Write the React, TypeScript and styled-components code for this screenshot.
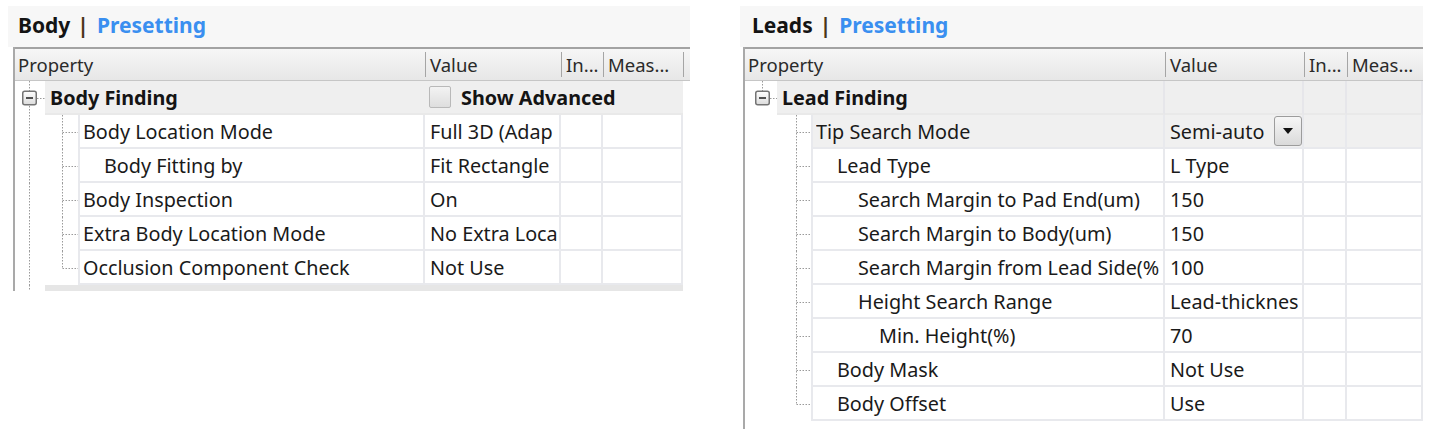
import React from "react";
import styled, { createGlobalStyle } from "styled-components";

const GlobalStyle = createGlobalStyle`
  html, body { margin: 0; padding: 0; background: #ffffff; }
  body { font-family: "Noto Sans", "Open Sans", "DejaVu Sans", sans-serif; color: #1a1a1a; }
  * { box-sizing: border-box; }
`;

const LINE = "#e8e9ed";
const DOT = "#9a9a9a";
const ROW_H = 34;
const ROW_FONT = "19.8px";

interface Cfg {
  x: number;
  width: number;
  titlePad: number;
  tableOffset: number;
  gutter: number;
  prop: number;
  value: number;
  inW: number;
  meas: number;
  expander: number;
  boxX: number;
  rootLineDown: boolean;
  childLineX: number;
  headerExtra: number;
  bottomStrip: boolean;
  catSeparators: boolean;
}

const leftCfg: Cfg = {
  x: 8, width: 682, titlePad: 10, tableOffset: 5,
  gutter: 63, prop: 347, value: 136, inW: 42, meas: 80,
  expander: 30, boxX: 7, rootLineDown: true, childLineX: 47,
  headerExtra: 7, bottomStrip: true, catSeparators: false,
};

const rightCfg: Cfg = {
  x: 50, width: 683, titlePad: 12, tableOffset: 3,
  gutter: 66, prop: 354, value: 139, inW: 43, meas: 76,
  expander: 32, boxX: 10, rootLineDown: false, childLineX: 51,
  headerExtra: 0, bottomStrip: false, catSeparators: true,
};

interface Item {
  label: string;
  value: string;
  level: number;
  selected?: boolean;
  dropdown?: boolean;
}

const Page = styled.div`
  display: flex;
  align-items: flex-start;
  width: 1438px;
  height: 434px;
  padding-top: 6px;
  overflow: hidden;
`;

const Panel = styled.section<{ $x: number; $w: number }>`
  margin-left: ${(p) => p.$x}px;
  width: ${(p) => p.$w}px;
  flex: none;
  display: flex;
  flex-direction: column;
`;

const TitleBar = styled.div<{ $pad: number }>`
  height: 41px;
  background: #f7f7f7;
  display: flex;
  align-items: center;
  padding-left: ${(p) => p.$pad}px;
  font-size: 21px;
  font-weight: 700;
  padding-bottom: 4px;
`;

const TitleName = styled.span`
  color: #141414;
`;

const TitleSep = styled.span`
  color: #4a3418;
  margin: 0 8px 0 7px;
`;

const TitleLink = styled.span`
  color: #3a8ff0;
`;

const Table = styled.div<{ $off: number }>`
  margin-left: ${(p) => p.$off}px;
  border-left: 2px solid #a9a9a9;
  display: flex;
  flex-direction: column;
  align-items: flex-start;
`;

const HeaderRow = styled.div`
  display: flex;
  height: 34px;
  border-top: 2px solid #a3a3a3;
  border-bottom: 1px solid #c6c6c6;
  background: linear-gradient(#f6f6f6, #e7e7e7);
  align-self: stretch;
`;

const HeaderCell = styled.div<{ $w: number; $pad?: number }>`
  width: ${(p) => p.$w}px;
  flex: none;
  display: flex;
  align-items: center;
  padding-left: ${(p) => p.$pad ?? 0}px;
  font-size: 18.5px;
  color: #2a2a2a;
  white-space: nowrap;
  overflow: hidden;
`;

const HeaderSep = styled.span`
  width: 1px;
  height: 25px;
  background: #a5a5a5;
  margin-right: 4px;
  flex: none;
`;

const Row = styled.div`
  display: flex;
  height: ${ROW_H}px;
  flex: none;
`;

const Gutter = styled.div<{ $w: number }>`
  width: ${(p) => p.$w}px;
  height: 100%;
  flex: none;
  background: #fff;
  svg { display: block; }
`;

const Cell = styled.div<{ $w: number; $bg?: string; $pad?: number; $left?: boolean }>`
  width: ${(p) => p.$w}px;
  height: 100%;
  flex: none;
  display: flex;
  align-items: center;
  padding-left: ${(p) => p.$pad ?? 5}px;
  background: ${(p) => p.$bg ?? "#fff"};
  border-right: 2px solid ${LINE};
  border-bottom: 2px solid ${LINE};
  ${(p) => (p.$left ? `border-left: 2px solid ${LINE};` : "")}
  font-size: ${ROW_FONT};
  color: #1a1a1a;
  white-space: nowrap;
  overflow: hidden;
`;

const CatCell = styled.div<{ $w: number; $pad?: number; $sep?: boolean }>`
  width: ${(p) => p.$w}px;
  height: 100%;
  flex: none;
  display: flex;
  align-items: center;
  padding-left: ${(p) => p.$pad ?? 5}px;
  background: #efefef;
  border-bottom: 2px solid #e9e9e9;
  ${(p) => (p.$sep ? "border-right: 2px solid #e6e6ea;" : "")}
  font-size: ${ROW_FONT};
  font-weight: 700;
  color: #141414;
  white-space: nowrap;
  overflow: hidden;
`;

const CellText = styled.span`
  flex: 1;
  overflow: hidden;
`;

const CheckBox = styled.span`
  width: 22px;
  height: 22px;
  border: 1.5px solid #b9b9b9;
  border-radius: 2px;
  background: linear-gradient(#f3f3f3, #dedede);
  margin-right: 10px;
  flex: none;
`;

const DropButton = styled.span`
  width: 28px;
  height: 30px;
  margin-right: 0;
  flex: none;
  border: 1px solid #9c9c9c;
  border-radius: 3px;
  background: linear-gradient(#f6f6f6, #dadada);
  display: flex;
  align-items: center;
  justify-content: center;
`;

const BottomStrip = styled.div`
  display: flex;
  height: 6px;
`;

const StripFill = styled.div<{ $w: number }>`
  width: ${(p) => p.$w}px;
  background: #e6e6e6;
`;

const Tail = styled.div`
  height: 8px;
`;

const dash = "1.5 1.5";

function ChildTree({ cfg, last }: { cfg: Cfg; last: boolean }) {
  const cx = cfg.childLineX + 0.5;
  const rootX = cfg.boxX + 7.5;
  return (
    <svg width={cfg.gutter} height={ROW_H}>
      {cfg.rootLineDown && (
        <line x1={rootX} y1={0} x2={rootX} y2={ROW_H} stroke={DOT} strokeWidth={1} strokeDasharray={dash} />
      )}
      <line x1={cx} y1={0} x2={cx} y2={last ? 17.5 : ROW_H} stroke={DOT} strokeWidth={1} strokeDasharray={dash} />
      <line x1={cx} y1={17.5} x2={cfg.gutter} y2={17.5} stroke={DOT} strokeWidth={1} strokeDasharray={dash} />
    </svg>
  );
}

function Expander({ cfg }: { cfg: Cfg }) {
  const bx = cfg.boxX;
  const mid = bx + 7.5;
  return (
    <svg width={cfg.expander} height={ROW_H}>
      <defs>
        <linearGradient id={`eg${cfg.x}`} x1="0" y1="0" x2="0" y2="1">
          <stop offset="0" stopColor="#ffffff" />
          <stop offset="1" stopColor="#dcdcdc" />
        </linearGradient>
      </defs>
      <line x1={mid} y1={0} x2={mid} y2={10} stroke={DOT} strokeWidth={1} strokeDasharray={dash} />
      {cfg.rootLineDown && (
        <line x1={mid} y1={25} x2={mid} y2={ROW_H} stroke={DOT} strokeWidth={1} strokeDasharray={dash} />
      )}
      <line x1={bx + 15} y1={17.5} x2={cfg.expander} y2={17.5} stroke={DOT} strokeWidth={1} strokeDasharray={dash} />
      <rect x={bx + 0.75} y={10.25} width={13.5} height={13.5} rx={2} fill={`url(#eg${cfg.x})`} stroke="#747474" strokeWidth={1.5} />
      <line x1={bx + 4} y1={17} x2={bx + 11} y2={17} stroke="#2a2a2a" strokeWidth={1.6} />
    </svg>
  );
}

function TreeTable({
  cfg, category, categoryExtra, items,
}: { cfg: Cfg; category: string; categoryExtra?: React.ReactNode; items: Item[] }) {
  const tableW = cfg.gutter + cfg.prop + cfg.value + cfg.inW + cfg.meas;
  return (
    <Table $off={cfg.tableOffset} style={{ width: tableW + cfg.headerExtra + 2 }}>
      <HeaderRow>
        <HeaderCell $w={cfg.gutter + cfg.prop} $pad={3}>Property</HeaderCell>
        <HeaderCell $w={cfg.value}><HeaderSep />Value</HeaderCell>
        <HeaderCell $w={cfg.inW}><HeaderSep />In...</HeaderCell>
        <HeaderCell $w={cfg.meas}><HeaderSep />Meas...</HeaderCell>
        {cfg.headerExtra > 0 && <HeaderCell $w={cfg.headerExtra}><HeaderSep /></HeaderCell>}
      </HeaderRow>
      <Row>
        <Gutter $w={cfg.expander}><Expander cfg={cfg} /></Gutter>
        <CatCell $w={cfg.gutter + cfg.prop - cfg.expander} $sep={cfg.catSeparators}>{category}</CatCell>
        {categoryExtra ? (
          <CatCell $w={cfg.value + cfg.inW + cfg.meas} $pad={4}>{categoryExtra}</CatCell>
        ) : (
          <>
            <CatCell $w={cfg.value} $sep={cfg.catSeparators} />
            <CatCell $w={cfg.inW} $sep={cfg.catSeparators} />
            <CatCell $w={cfg.meas} $sep={cfg.catSeparators} />
          </>
        )}
      </Row>
      {items.map((it, i) => {
        const bg = it.selected ? "#f0f0f0" : "#fff";
        return (
          <Row key={it.label}>
            <Gutter $w={cfg.gutter}><ChildTree cfg={cfg} last={i === items.length - 1} /></Gutter>
            <Cell $w={cfg.prop} $left $bg={bg} $pad={3 + (it.level - 1) * 21}>
              <CellText>{it.label}</CellText>
            </Cell>
            <Cell $w={cfg.value} $bg={bg}>
              <CellText>{it.value}</CellText>
              {it.dropdown && (
                <DropButton>
                  <svg width="10" height="6" viewBox="0 0 10 6"><path d="M0 0H10L5 6Z" fill="#111" /></svg>
                </DropButton>
              )}
            </Cell>
            <Cell $w={cfg.inW} $bg={bg} />
            <Cell $w={cfg.meas} $bg={bg} />
          </Row>
        );
      })}
      {cfg.bottomStrip ? (
        <BottomStrip>
          <Gutter $w={cfg.expander}>
            <svg width={cfg.expander} height={6}>
              <line x1={cfg.boxX + 7.5} y1={0} x2={cfg.boxX + 7.5} y2={6} stroke={DOT} strokeWidth={1} strokeDasharray={dash} />
            </svg>
          </Gutter>
          <StripFill $w={tableW - cfg.expander} />
        </BottomStrip>
      ) : (
        <Tail />
      )}
    </Table>
  );
}

const bodyItems: Item[] = [
  { label: "Body Location Mode", value: "Full 3D (Adap", level: 1 },
  { label: "Body Fitting by", value: "Fit Rectangle", level: 2 },
  { label: "Body Inspection", value: "On", level: 1 },
  { label: "Extra Body Location Mode", value: "No Extra Loca", level: 1 },
  { label: "Occlusion Component Check", value: "Not Use", level: 1 },
];

const leadItems: Item[] = [
  { label: "Tip Search Mode", value: "Semi-auto", level: 1, selected: true, dropdown: true },
  { label: "Lead Type", value: "L Type", level: 2 },
  { label: "Search Margin to Pad End(um)", value: "150", level: 3 },
  { label: "Search Margin to Body(um)", value: "150", level: 3 },
  { label: "Search Margin from Lead Side(%", value: "100", level: 3 },
  { label: "Height Search Range", value: "Lead-thicknes", level: 3 },
  { label: "Min. Height(%)", value: "70", level: 4 },
  { label: "Body Mask", value: "Not Use", level: 2 },
  { label: "Body Offset", value: "Use", level: 2 },
];

export default function App() {
  return (
    <>
      <GlobalStyle />
      <Page>
        <Panel $x={leftCfg.x} $w={leftCfg.width}>
          <TitleBar $pad={leftCfg.titlePad}>
            <TitleName>Body</TitleName>
            <TitleSep>|</TitleSep>
            <TitleLink>Presetting</TitleLink>
          </TitleBar>
          <TreeTable
            cfg={leftCfg}
            category="Body Finding"
            categoryExtra={<><CheckBox />Show Advanced</>}
            items={bodyItems}
          />
        </Panel>
        <Panel $x={rightCfg.x} $w={rightCfg.width}>
          <TitleBar $pad={rightCfg.titlePad}>
            <TitleName>Leads</TitleName>
            <TitleSep>|</TitleSep>
            <TitleLink>Presetting</TitleLink>
          </TitleBar>
          <TreeTable cfg={rightCfg} category="Lead Finding" items={leadItems} />
        </Panel>
      </Page>
    </>
  );
}
